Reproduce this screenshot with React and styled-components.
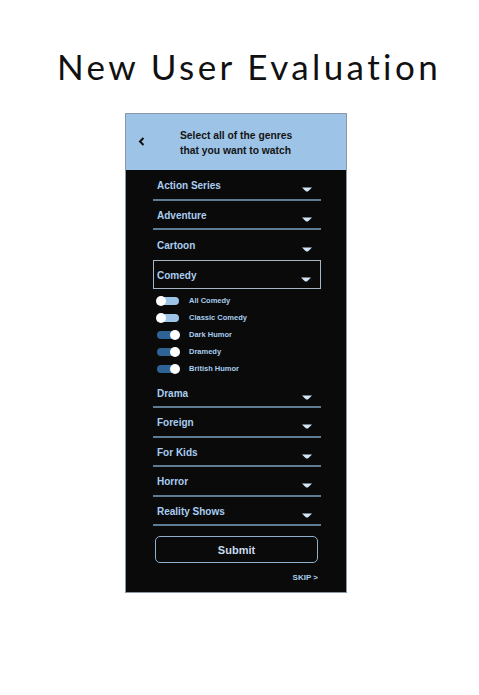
import React from "react";
import styled, { createGlobalStyle } from "styled-components";

const Global = createGlobalStyle`
  html, body { margin: 0; padding: 0; background: #ffffff; }
  body { font-family: "Liberation Sans", Arial, sans-serif; }
`;

const Page = styled.div`
  width: 479px;
  min-height: 695px;
  background: #fff;
  padding-top: 45px;
  box-sizing: border-box;
`;

const Title = styled.h1`
  margin: 0;
  padding-left: 57px;
  height: 68px;
  font-family: Lato, "Open Sans", sans-serif;
  font-weight: 400;
  font-size: 35px;
  line-height: 42px;
  letter-spacing: 3.4px;
  color: #111;
  white-space: nowrap;
`;

const Phone = styled.div`
  margin-left: 125px;
  width: 222px;
  height: 480px;
  box-sizing: border-box;
  border: 1px solid #8a97a4;
  background: #0a0a0a;
  display: flex;
  flex-direction: column;
`;

const Header = styled.div`
  height: 56px;
  background: #9dc3e6;
  display: flex;
  align-items: center;
  padding-left: 12px;
  box-sizing: border-box;
  flex-shrink: 0;
`;

const Back = styled.button`
  border: 0;
  background: none;
  padding: 0;
  width: 8px;
  height: 10px;
  display: flex;
  align-items: center;
  cursor: pointer;
  margin-top: -2px;
`;

const HeaderText = styled.div`
  margin-left: 34px;
  font-weight: 700;
  font-size: 10.3px;
  line-height: 15px;
  color: #141414;
  margin-top: 1px;
`;

const List = styled.div`
  padding: 1px 25px 0 27px;
  display: flex;
  flex-direction: column;
`;

const Row = styled.div`
  height: 29.5px;
  box-sizing: border-box;
  display: flex;
  align-items: center;
  justify-content: space-between;
  padding: 0 9px 0 4px;
  border-bottom: ${(p) => (p.$noLine ? "0" : "2px solid #5f7a93")};
  border: ${(p) => (p.$open ? "1px solid #a7b7c6" : undefined)};
  padding-left: ${(p) => (p.$open ? "3px" : "4px")};
`;

const Label = styled.span`
  font-weight: 700;
  font-size: 10px;
  color: #a9cdf0;
  margin-top: 2px;
`;

const Caret = styled.svg`
  width: 10px;
  height: 5px;
  margin-top: 10px;
  flex-shrink: 0;
`;

const SubList = styled.div`
  padding: 3px 0 1.5px 4px;
  display: flex;
  flex-direction: column;
`;

const SubRow = styled.label`
  height: 17px;
  display: flex;
  align-items: center;
  gap: 10px;
`;

const Track = styled.span`
  position: relative;
  width: 22px;
  height: 8px;
  border-radius: 4px;
  background: ${(p) => (p.$on ? "#2e6396" : "#9dc3e6")};
  flex-shrink: 0;
`;

const Knob = styled.span`
  position: absolute;
  top: -1px;
  ${(p) => (p.$on ? "right: -1px;" : "left: -1px;")}
  width: 10px;
  height: 10px;
  border-radius: 50%;
  background: #ffffff;
`;

const SubLabel = styled.span`
  font-weight: 700;
  font-size: 7.5px;
  color: #a9cdf0;
`;

const Submit = styled.button`
  margin: 10px 3px 0 2px;
  height: 27px;
  border: 1px solid #8fb0cf;
  border-radius: 5px;
  background: #0a0a0a;
  color: #c9dcee;
  font-family: "Liberation Sans", Arial, sans-serif;
  font-weight: 700;
  font-size: 11px;
  cursor: pointer;
`;

const Skip = styled.div`
  align-self: flex-end;
  margin: 10px 3px 0 0;
  font-weight: 700;
  font-size: 8px;
  color: #a9cdf0;
`;

const CaretIcon = () => (
  <Caret viewBox="0 0 10 5">
    <path d="M0 0.6 H10 L6.2 4.2 Q5 5 3.8 4.2 Z" fill="#d3e6f7" />
  </Caret>
);

const Genre = ({ name, noLine, open }) => (
  <Row $noLine={noLine} $open={open}>
    <Label>{name}</Label>
    <CaretIcon />
  </Row>
);

const subs = [
  ["All Comedy", false],
  ["Classic Comedy", false],
  ["Dark Humor", true],
  ["Dramedy", true],
  ["British Humor", true],
];

export default function App() {
  return (
    <Page>
      <Global />
      <Title>New User Evaluation</Title>
      <Phone>
        <Header>
          <Back aria-label="Back">
            <svg width="7" height="9" viewBox="0 0 7 9">
              <path d="M5.5 1 L2 4.5 L5.5 8" stroke="#111" strokeWidth="2" fill="none" />
            </svg>
          </Back>
          <HeaderText>
            Select all of the genres
            <br />
            that you want to watch
          </HeaderText>
        </Header>
        <List>
          <Genre name="Action Series" />
          <Genre name="Adventure" />
          <Genre name="Cartoon" noLine />
          <Genre name="Comedy" open />
          <SubList>
            {subs.map(([n, on]) => (
              <SubRow key={n}>
                <Track $on={on}>
                  <Knob $on={on} />
                </Track>
                <SubLabel>{n}</SubLabel>
              </SubRow>
            ))}
          </SubList>
          <Genre name="Drama" />
          <Genre name="Foreign" />
          <Genre name="For Kids" />
          <Genre name="Horror" />
          <Genre name="Reality Shows" />
          <Submit>Submit</Submit>
          <Skip>SKIP &gt;</Skip>
        </List>
      </Phone>
    </Page>
  );
}
